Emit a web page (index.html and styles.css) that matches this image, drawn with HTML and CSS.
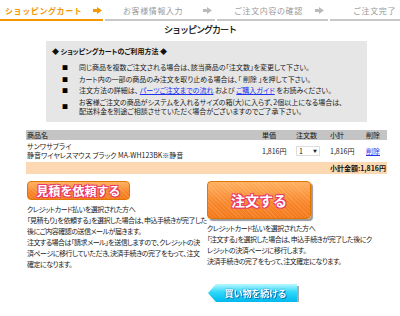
FILE: index.html
```html
<!DOCTYPE html>
<html lang="ja">
<head>
    <meta charset="UTF-8">
    <title>ショッピングカート</title>
    <link rel="stylesheet" href="styles.css">
</head>
<body>
    <div class="steps">
        <div class="step current step1">
            <span>ショッピングカート</span>
            <svg class="arrow" width="9" height="7" viewBox="0 0 9 7"><polygon points="0,2 4,2 4,0 9,3.5 4,7 4,5 0,5" fill="#f39800"/></svg>
        </div>
        <div class="step step2">
            <span>お客様情報入力</span>
            <svg class="arrow" width="9" height="7" viewBox="0 0 9 7"><polygon points="0,2 4,2 4,0 9,3.5 4,7 4,5 0,5" fill="#bbb"/></svg>
        </div>
        <div class="step step3">
            <span>ご注文内容の確認</span>
            <svg class="arrow" width="9" height="7" viewBox="0 0 9 7"><polygon points="0,2 4,2 4,0 9,3.5 4,7 4,5 0,5" fill="#bbb"/></svg>
        </div>
        <div class="step step4">
            <span>ご注文完了</span>
        </div>
    </div>

    <h1>ショッピングカート</h1>

    <div class="guide">
        <h2>◆ ショッピングカートのご利用方法 ◆</h2>
        <ul>
            <li><span class="sq">■</span><span>同じ商品を複数ご注文される場合は、該当商品の「注文数」を変更して下さい。</span></li>
            <li><span class="sq">■</span><span>カート内の一部の商品のみ注文を取り止める場合は、「 削除 」を押して下さい。</span></li>
            <li><span class="sq">■</span><span>注文方法の詳細は、 <a href="#">パーツご注文までの流れ</a> および <a href="#">ご購入ガイド</a> をお読みください。</span></li>
            <li><span class="sq">■</span><span>お客様ご注文の商品がシステムを入れるサイズの箱(大)に入らず、2個以上になる場合は、<br>配送料金を別途ご相談させていただく場合がございますのでご了承下さい。</span></li>
        </ul>
    </div>

    <table class="cart">
        <tr class="head">
            <th class="name">商品名</th>
            <th class="price">単価</th>
            <th class="qty">注文数</th>
            <th class="sub">小計</th>
            <th class="del">削除</th>
        </tr>
        <tr class="item">
            <td class="name">サンワサプライ<br>静音ワイヤレスマウス ブラック MA-WH123BK※静音</td>
            <td class="price">1,816円</td>
            <td class="qty"><span class="select">1<i>▼</i></span></td>
            <td class="sub">1,816円</td>
            <td class="del"><a href="#">削除</a></td>
        </tr>
        <tr class="total">
            <td colspan="5">小計金額:1,816円</td>
        </tr>
    </table>

    <div class="orders">
        <div class="col left">
            <a href="#" class="btn-orange small">見積を依頼する</a>
            <p>クレジットカード払いを選択された方へ<br>「見積もり」を依頼する」を選択した場合は、申込手続きが完了した<br>後にご内容確認の送信メールが届きます。<br>注文する場合は「請求メール」を送信しますので、クレジットの決<br>済ページに移行していただき、決済手続きの完了をもって、注文<br>確定になります。</p>
        </div>
        <div class="col right">
            <a href="#" class="btn-orange big">注文する</a>
            <p>クレジットカード払いを選択された方へ<br>「注文する」を選択した場合は、申込手続きが完了した後にク<br>レジットの決済ページに移行します。<br>決済手続きの完了をもって、注文確定になります。</p>
        </div>
    </div>

    <div class="continue">
        <a href="#" class="btn-cyan">買い物を続ける</a>
    </div>
</body>
</html>
```

FILE: styles.css
```css
body {
    margin: 0;
    font-family: "Noto Sans CJK JP", sans-serif;
    font-size: 7px;
    font-feature-settings: "palt";
    color: #222;
    background: #fff;
    width: 400px;
}

.steps {
    display: flex;
    gap: 2px;
    height: 21px;
    font-feature-settings: normal;
}

.step {
    display: flex;
    align-items: center;
    border-bottom: 2px solid #c8c8c8;
    color: #999;
    font-size: 8px;
    letter-spacing: 0.6px;
    box-sizing: border-box;
    height: 21px;
    padding-top: 2px;
}

.step.current {
    border-bottom-color: #f39800;
    color: #f39800;
    font-weight: bold;
}

.step1 { width: 103px; padding-left: 5px; }
.step1 .arrow { margin-left: 11px; }
.step2 { width: 110px; padding-left: 18px; }
.step2 .arrow { margin-left: 20px; }
.step3 { width: 111px; padding-left: 17px; }
.step3 .arrow { margin-left: 12px; }
.step4 { flex: 1; padding-left: 23px; }

h1 {
    margin: 2px 0 0;
    text-align: center;
    font-size: 9px;
    letter-spacing: -1px;
    font-feature-settings: normal;
    font-weight: normal;
    color: #000;
    -webkit-text-stroke: 0.2px #000;
    height: 17px;
}

.guide {
    margin: 1px 0 0 46px;
    width: 321px;
    background: #e6e6e6;
    padding: 5px 0 6px;
    box-sizing: border-box;
    height: 81px;
}

.guide h2 {
    margin: 0 0 7px 6px;
    font-size: 7px;
    font-weight: bold;
    color: #111;
}

.guide ul {
    list-style: none;
    margin: 0;
    padding: 0 0 0 16px;
}

.guide li {
    display: flex;
    align-items: center;
    line-height: 9px;
    margin-bottom: 2.5px;
}

.guide .sq {
    width: 17px;
    flex-shrink: 0;
    font-size: 6px;
    color: #000;
}

a {
    color: #2233ee;
}

.cart {
    margin: 8px 0 0 26px;
    width: 361px;
    border-collapse: collapse;
}

.cart th {
    background: #c4c4c4;
    font-weight: normal;
    text-align: left;
    height: 10px;
    padding: 0 1px;
    line-height: 10px;
    color: #111;
}

.cart td {
    padding: 0 1px;
    line-height: 9px;
}

.cart .item td {
    height: 22px;
}

.cart .price { width: 32px; }
.cart .qty { width: 32px; }
.cart .sub { width: 34px; }
.cart .del { width: 20px; }

.select {
    display: inline-flex;
    justify-content: space-between;
    align-items: center;
    width: 18px;
    height: 8px;
    border: 1px solid #ddd;
    padding: 0 2px;
}

.select i {
    font-style: normal;
    font-size: 4px;
}

.cart .total td {
    background: #fdd9b3;
    text-align: right;
    font-weight: bold;
    height: 12px;
    color: #111;
}

.orders {
    display: flex;
    margin: 7px 0 0 27px;
}

.col p {
    margin: 4px 0 0;
    line-height: 11px;
    letter-spacing: -0.5px;
    white-space: nowrap;
}

.left { width: 177px; }
.right { margin-left: 3px; width: 190px; }

.btn-orange {
    display: flex;
    align-items: center;
    justify-content: center;
    color: #fff;
    text-decoration: none;
    font-weight: bold;
    font-feature-settings: normal;
    border: 1px solid #e27400;
    border-radius: 4px;
    background:
        repeating-linear-gradient(45deg, rgba(255,255,255,0.12) 0 1px, transparent 1px 3px),
        linear-gradient(#ffb060, #f8852a 60%, #f37a1c);
    text-shadow: 0 0 1px #e8386a, 1px 1px 0 #e8386a, -1px -1px 0 #e8386a, 1px -1px 0 #e8386a, -1px 1px 0 #e8386a;
    box-sizing: border-box;
}

.btn-orange.small {
    width: 103px;
    height: 19px;
    font-size: 12px;
}

.btn-orange.big {
    width: 104px;
    height: 38px;
    font-size: 14px;
    box-shadow: 2px 2px 1px #999;
}

.continue {
    padding: 14px 0 0 208px;
    filter: drop-shadow(2px 2px 0 #aaa);
}

.btn-cyan {
    display: flex;
    align-items: center;
    justify-content: center;
    width: 89px;
    height: 18px;
    color: #fff;
    text-decoration: none;
    font-weight: bold;
    font-size: 9px;
    background: linear-gradient(#b8f8ff, #30d8fa 45%, #00b8ee);
    clip-path: polygon(8px 0, 100% 0, 100% 100%, 8px 100%, 0 50%);
    text-shadow: 0 0 2px #0077bb, 1px 1px 0 #0a7ab8;
    padding-left: 6px;
    box-sizing: border-box;
}
```
